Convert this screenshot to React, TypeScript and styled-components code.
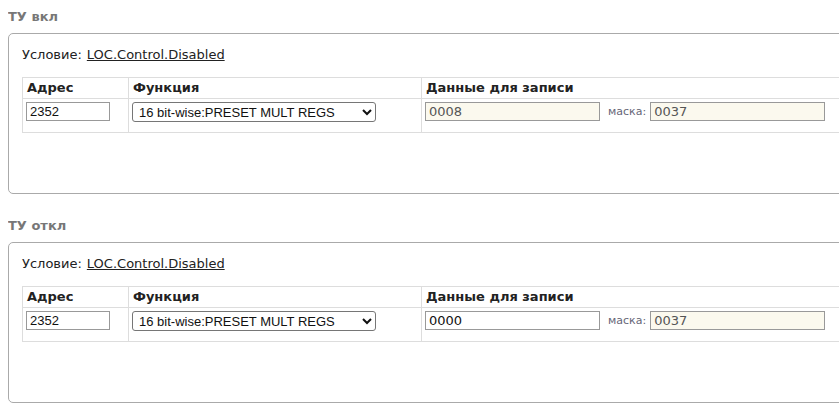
import React from "react";
import styled, { createGlobalStyle } from "styled-components";

const GlobalStyle = createGlobalStyle`
	body {
		margin: 8px 0 8px 8px;
		background: #fff;
		font-family: "DejaVu Sans", Verdana, sans-serif;
		font-size: 13px;
		color: #222;
	}
`;

const Page = styled.div`
	overflow: hidden;
`;

const Section = styled.section`
	margin-bottom: 23px;
`;

const Title = styled.h3`
	margin: 0 0 7px;
	font-size: 13px;
	line-height: 18px;
	font-weight: bold;
	color: #777;
`;

const Box = styled.div`
	width: 900px;
	border: 1px solid #aaa;
	border-radius: 5px;
	padding: 12px 13px 60px;
`;

const Condition = styled.div`
	line-height: 18px;
	margin-bottom: 13px;
	color: #222;
`;

const Link = styled.a`
	color: #222;
	text-decoration: underline;
	margin-left: 5px;
	cursor: pointer;
`;

const Table = styled.table`
	border-collapse: collapse;
	width: 100%;
	table-layout: fixed;
`;

const Th = styled.th<{ $w?: number }>`
	width: ${(p) => (p.$w ? `${p.$w}px` : "auto")};
	border: 1px solid #ddd;
	text-align: left;
	font-weight: bold;
	font-size: 13px;
	line-height: 20px;
	padding: 0 4px;
	color: #222;
`;

const Td = styled.td`
	border: 1px solid #ddd;
	padding: 3px 3px 10px;
	vertical-align: top;
	white-space: nowrap;
`;

const AddrInput = styled.input`
	box-sizing: border-box;
	width: 84px;
	height: 19px;
	border: 1px solid #999;
	padding: 0 3px;
	font-family: "Liberation Sans", Arial, sans-serif;
	font-size: 13px;
	color: #111;
	outline: none;
`;

const Select = styled.select`
	box-sizing: border-box;
	width: 244px;
	height: 20px;
	border: 1px solid #767676;
	border-radius: 3px;
	font-family: "Liberation Sans", Arial, sans-serif;
	font-size: 13px;
	color: #111;
	background: #fff;
	padding: 0 2px;
`;

const DataInput = styled.input<{ $ro?: boolean }>`
	box-sizing: border-box;
	width: 175px;
	height: 19px;
	border: 1px solid #999;
	padding: 0 3px;
	font-family: "DejaVu Sans", Verdana, sans-serif;
	font-size: 13px;
	color: ${(p) => (p.$ro ? "#555" : "#111")};
	background: ${(p) => (p.$ro ? "#fbf9ee" : "#fff")};
	outline: none;
	vertical-align: top;
`;

const MaskLabel = styled.span`
	display: inline-block;
	margin: 0 4px 0 8px;
	font-size: 11px;
	line-height: 19px;
	color: #667;
	vertical-align: top;
`;

type Block = {
	title: string;
	data: string;
	dataRo: boolean;
};

const blocks: Block[] = [
	{ title: "ТУ вкл", data: "0008", dataRo: true },
	{ title: "ТУ откл", data: "0000", dataRo: false },
];

export default function App() {
	return (
		<Page>
			<GlobalStyle />
			{blocks.map((b) => (
				<Section key={b.title}>
					<Title>{b.title}</Title>
					<Box>
						<Condition>
							Условие:<Link>LOC.Control.Disabled</Link>
						</Condition>
						<Table>
							<thead>
								<tr>
									<Th $w={97}>Адрес</Th>
									<Th $w={284}>Функция</Th>
									<Th>Данные для записи</Th>
								</tr>
							</thead>
							<tbody>
								<tr>
									<Td>
										<AddrInput defaultValue="2352" />
									</Td>
									<Td>
										<Select defaultValue="16">
											<option value="16">16 bit-wise:PRESET MULT REGS</option>
										</Select>
									</Td>
									<Td>
										<DataInput $ro={b.dataRo} readOnly={b.dataRo} defaultValue={b.data} />
										<MaskLabel>маска:</MaskLabel>
										<DataInput $ro readOnly defaultValue="0037" />
									</Td>
								</tr>
							</tbody>
						</Table>
					</Box>
				</Section>
			))}
		</Page>
	);
}
